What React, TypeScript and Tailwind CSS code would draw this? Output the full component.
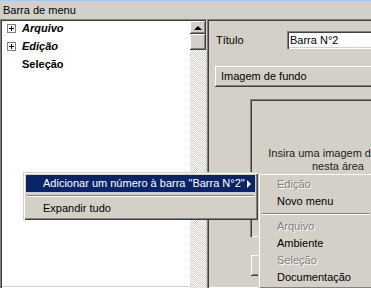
import React from "react";

// Caixa de diálogo "Barra de menu" no estilo Windows 2000, com menu de contexto aberto.

const raised =
  "shadow-[inset_-1px_-1px_#404040,inset_1px_1px_#ffffff,inset_-2px_-2px_#808080,inset_2px_2px_#d4d0c8]";
const sunken =
  "shadow-[inset_1px_1px_#808080,inset_2px_2px_#404040,inset_-1px_-1px_#ffffff,inset_-2px_-2px_#d4d0c8]";
const menuFrame =
  "shadow-[inset_1px_1px_#d4d0c8,inset_2px_2px_#ffffff,inset_-1px_-1px_#404040,inset_-2px_-2px_#808080]";
const disabledText = "text-[#808080] [text-shadow:1px_1px_0_#ffffff]";

function PlusBox() {
  return (
    <span className="relative mr-[6px] inline-block h-[9px] w-[9px] shrink-0 border border-[#808080] bg-white">
      <span className="absolute left-[1px] top-[3px] h-px w-[5px] bg-black" />
      <span className="absolute left-[3px] top-[1px] h-[5px] w-px bg-black" />
    </span>
  );
}

function TreeRow({ label, plus, italic }: { label: string; plus?: boolean; italic?: boolean }) {
  return (
    <div className="flex h-[18px] items-center pl-[6px]">
      {plus ? <PlusBox /> : <span className="mr-[6px] w-[9px] shrink-0" />}
      <span className={`font-bold text-black ${italic ? "italic" : ""}`}>{label}</span>
    </div>
  );
}

type Item = { label: string; disabled?: boolean } | "sep";

const SUBMENU: Item[] = [
  { label: "Edição", disabled: true },
  { label: "Novo menu" },
  "sep",
  { label: "Arquivo", disabled: true },
  { label: "Ambiente" },
  { label: "Seleção", disabled: true },
  { label: "Documentação" },
];

function Separator() {
  return (
    <div className="flex h-[8px] items-center px-[1px]">
      <div className="h-[2px] w-full border-t border-b border-t-[#808080] border-b-white" />
    </div>
  );
}

export default function App() {
  return (
    <div className="relative h-[288px] w-[371px] overflow-hidden bg-[#d4d0c8] font-['Liberation_Sans',Arial,sans-serif] text-[11px] text-black">
      {/* barra de título do painel */}
      <div className="flex h-[19px] items-center border-t border-[#a6caf0] pl-[3px]">Barra de menu</div>

      <div className="flex h-[269px]">
        {/* árvore de menus */}
        <div className={`flex w-[206px] shrink-0 bg-white pl-px pt-px ${sunken}`}>
          <div className="-mt-px flex-1">
            <TreeRow label="Arquivo" plus italic />
            <TreeRow label="Edição" plus italic />
            <TreeRow label="Seleção" />
          </div>
          <div className="flex w-[16px] flex-col pt-px">
            <div className={`flex h-[13px] items-center justify-center bg-[#d4d0c8] ${raised}`}>
              <span className="h-0 w-0 border-x-[4px] border-b-[4px] border-x-transparent border-b-black" />
            </div>
            <div className={`h-[16px] bg-[#d4d0c8] ${raised}`} />
            <div className="flex-1 bg-[repeating-conic-gradient(#d4d0c8_0%_25%,#ffffff_0%_50%)] bg-[length:2px_2px]" />
          </div>
        </div>

        {/* propriedades */}
        <div className={`ml-px w-[200px] shrink-0 pl-[8px] pt-[12px] ${sunken}`}>
          <div className="flex h-[18px] items-center">
            <span className="ml-px w-[71px] shrink-0">Título</span>
            <div className={`flex h-[18px] flex-1 items-center bg-white pl-[3px] ${sunken}`}>Barra N°2</div>
          </div>
          <div className={`mt-[17px] flex h-[21px] items-center pl-[6px] ${raised}`}>Imagem de fundo</div>
          <div className={`ml-[35px] mt-[12px] flex h-[138px] w-[176px] flex-col items-center justify-center pb-[16px] text-center leading-[13px] text-[#202020] ${sunken}`}>
            <span className="whitespace-nowrap">Insira uma imagem de fundo</span>
            <span>nesta área</span>
          </div>
          <div className={`ml-[36px] mt-[18px] h-[21px] w-[80px] ${raised}`} />
        </div>
      </div>

      {/* menu de contexto */}
      <div className={`absolute left-[23px] top-[172px] w-[235px] bg-[#d4d0c8] p-[3px] ${menuFrame}`}>
        <div className="relative flex h-[17px] items-center bg-[#0a246a] pl-[17px] text-white">
          Adicionar um número à barra "Barra N°2"
          <span className="absolute right-[4px] top-[5px] h-0 w-0 border-y-[4px] border-l-[4px] border-y-transparent border-l-white" />
        </div>
        <Separator />
        <div className="flex h-[17px] items-center pl-[17px]">Expandir tudo</div>
      </div>

      {/* submenu */}
      <div className={`absolute left-[258px] top-[173px] w-[115px] bg-[#d4d0c8] p-[3px] ${menuFrame}`}>
        {SUBMENU.map((it, i) =>
          it === "sep" ? (
            <Separator key={i} />
          ) : (
            <div key={i} className={`flex h-[17px] items-center pl-[16px] ${it.disabled ? disabledText : ""}`}>
              {it.label}
            </div>
          ),
        )}
      </div>
    </div>
  );
}
